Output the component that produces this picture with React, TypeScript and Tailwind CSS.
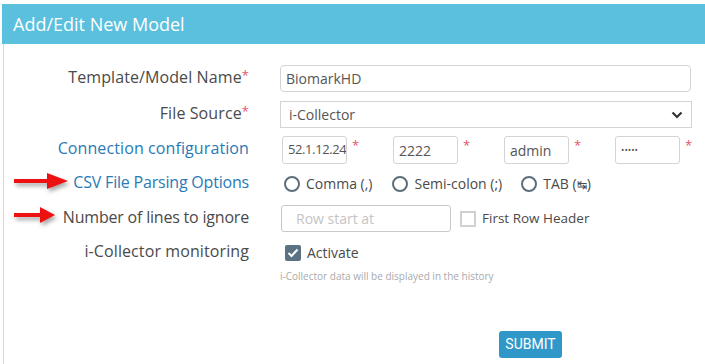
import React from "react";

const font = { fontFamily: "'Open Sans', 'Noto Sans', sans-serif" };

function Star({ className = "" }: { className?: string }) {
  return <span className={"text-[#e8546b] text-[13px] leading-none " + className}>*</span>;
}

function Label({ children, blue, tight }: { children: React.ReactNode; blue?: boolean; tight?: boolean }) {
  return (
    <div
      className={
        "relative -top-[2px] w-[246px] shrink-0 text-right text-[16px] leading-none pr-[1px] " +
        (tight ? "tracking-[-0.2px] " : "tracking-[0.1px] ") +
        (blue ? "text-[#2a7ab5]" : "text-[#4a4a4a]")
      }
    >
      {children}
    </div>
  );
}

function Radio({ label }: { label: React.ReactNode }) {
  return (
    <div className="flex items-center gap-[6px]">
      <span className="w-[16px] h-[16px] rounded-full border-2 border-[#5b6e79] bg-white" />
      <span className="text-[14px] text-[#4a4a4a] leading-none">{label}</span>
    </div>
  );
}

function Arrow({ shaft, head, top }: { shaft: number; head: number; top: number }) {
  const w = shaft + head + 6;
  return (
    <svg
      className="absolute left-[12px]"
      style={{ top, filter: "drop-shadow(2px 3px 2px rgba(0,0,0,0.35))" }}
      width={w}
      height={20}
      viewBox={`0 0 ${w} 20`}
    >
      <rect x={2} y={8} width={shaft} height={4} fill="#ee1111" />
      <polygon points={`${shaft - 2},2 ${shaft + head},10 ${shaft - 2},18`} fill="#ee1111" />
    </svg>
  );
}

export default function App() {
  return (
    <div className="relative w-[705px] h-[364px] bg-white overflow-hidden pt-[4px] pl-[2px]" style={font}>
      <div className="h-[40px] bg-[#5bc0de] flex items-center pl-[11px]">
        <span className="text-white text-[18px] leading-none">Add/Edit New Model</span>
      </div>
      <div className="ml-[1px] border-l border-[#d9d9d9] h-[320px] pt-[21px]">
        {/* Row 1 */}
        <div className="flex items-center h-[27px]">
          <Label>
            Template/Model Name<Star className="relative -top-[3px]" />
          </Label>
          <div className="ml-[30px] w-[411px] h-[27px] border border-[#d4d4d4] rounded-[4px] flex items-center pl-[5px] text-[14px] text-[#555]">
            BiomarkHD
          </div>
        </div>
        {/* Row 2 */}
        <div className="flex items-center h-[27px] mt-[9px]">
          <Label>
            File Source<Star className="relative -top-[3px]" />
          </Label>
          <div className="ml-[30px] w-[412px] h-[27px] border border-[#d4d4d4] flex items-center justify-between pl-[8px] pr-[8px] text-[14px] text-[#555]">
            <span>i-Collector</span>
            <svg width="12" height="8" viewBox="0 0 12 8">
              <path d="M1.5 1.5 L6 6 L10.5 1.5" fill="none" stroke="#333" strokeWidth="2.2" />
            </svg>
          </div>
        </div>
        {/* Row 3 */}
        <div className="flex items-center h-[28px] mt-[8px]">
          <Label blue>Connection configuration</Label>
          <div className="ml-[32px] flex h-[28px]">
            {["52.1.12.24", "2222", "admin", "•••••"].map((v, i) => (
              <div key={i} className="w-[111px] flex items-start">
                <div
                  className={
                    "w-[65px] h-[28px] border border-[#d4d4d4] rounded-[3px] flex items-center pl-[5px] text-[#555] overflow-hidden whitespace-nowrap " +
                    (i === 3 ? "text-[9px]" : i === 0 ? "text-[13px] tracking-[-0.4px]" : "text-[14px]")
                  }
                >
                  {v}
                </div>
                <Star className="ml-[5px] mt-[3px]" />
              </div>
            ))}
          </div>
        </div>
        {/* Row 4 */}
        <div className="flex items-center h-[20px] mt-[10px]">
          <Label blue tight>CSV File Parsing Options</Label>
          <div className="ml-[34px] flex items-center">
            <Radio label="Comma (,)" />
            <div className="ml-[20px]">
              <Radio label="Semi-colon (;)" />
            </div>
            <div className="ml-[19px]">
              <Radio
                label={
                  <span>
                    TAB (<span className="text-[12px]" style={{ fontFamily: "'DejaVu Sans', sans-serif" }}>↹</span>)
                  </span>
                }
              />
            </div>
          </div>
        </div>
        {/* Row 5 */}
        <div className="flex items-center h-[27px] mt-[11px]">
          <Label tight>Number of lines to ignore</Label>
          <div className="ml-[31px] w-[170px] h-[27px] border border-[#c9c9c9] rounded-[3px] flex items-center pl-[14px] text-[14px] text-[#c4c4c4]">
            Row start at
          </div>
          <div className="ml-[9px] w-[16px] h-[16px] border-2 border-[#d0d0d0] bg-white" />
          <span className="ml-[6px] text-[13.5px] text-[#4a4a4a] leading-none">First Row Header</span>
        </div>
        {/* Row 6 */}
        <div className="flex items-center h-[18px] mt-[12px]">
          <Label>i-Collector monitoring</Label>
          <div className="ml-[35px] w-[16px] h-[16px] bg-[#5a7282] rounded-[2px] flex items-center justify-center">
            <svg width="12" height="10" viewBox="0 0 12 10">
              <path d="M1.5 5 L4.5 8 L10.5 1.5" fill="none" stroke="white" strokeWidth="2" />
            </svg>
          </div>
          <span className="ml-[6px] text-[14px] text-[#4a4a4a] leading-none">Activate</span>
        </div>
        <div className="ml-[276px] mt-[9px] text-[10px] text-[#aaa] leading-none">
          i-Collector data will be displayed in the history
        </div>
        <div className="ml-[495px] mt-[50px]">
          <button
            className="w-[63px] h-[27px] bg-[#2f98c8] rounded-[3px] text-white text-[14px] flex items-center justify-center"
            style={{ fontFamily: "Roboto, 'Liberation Sans', sans-serif" }}
          >
            SUBMIT
          </button>
        </div>
      </div>
      <Arrow shaft={37} head={19} top={171} />
      <Arrow shaft={30} head={13} top={205} />
    </div>
  );
}
